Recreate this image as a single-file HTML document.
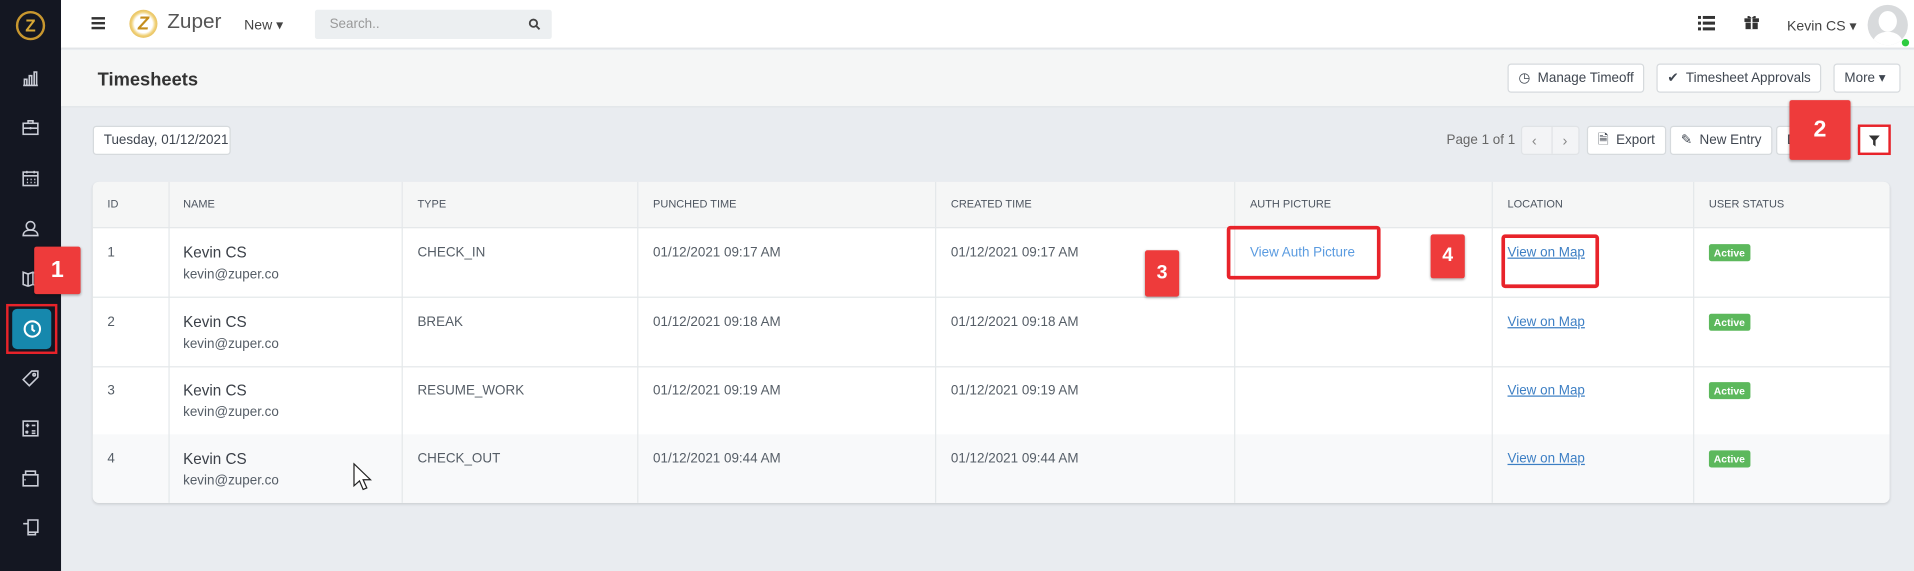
<!DOCTYPE html>
<html><head><meta charset="utf-8"><style>
*{box-sizing:border-box;margin:0;padding:0}
html,body{width:1914px;height:571px;overflow:hidden;background:#e9ecf0;font-family:"Liberation Sans",sans-serif}
#s{position:absolute;left:0;top:0;width:1568px;height:468px;transform:scale(1.22066);transform-origin:0 0;background:#e9ecf0}
.a{position:absolute}
.side{left:0;top:0;width:50px;height:468px;background:#141722}
.ic{position:absolute;left:19px;width:12px;height:12px;border:1.3px solid #c9ccd6;border-radius:2px}
.top{left:50px;top:0;width:1518px;height:40px;background:#fff;border-bottom:1px solid #dde1e4}
.hdr{left:50px;top:41px;width:1518px;height:47px;background:#f5f6f6;border-bottom:1px solid #dfe3e6}
.btn{position:absolute;background:#fff;border:1px solid #d6dadd;border-radius:3px;font-size:11px;color:#3f4650;line-height:22px;padding:0 8px;white-space:nowrap}
.tbl{left:76px;top:149px;width:1472px;height:263px;background:#fff;border-radius:5px;overflow:hidden;box-shadow:0 1px 2px rgba(0,0,0,.12)}
.th{position:absolute;top:0;height:38px;background:#f5f6f6;width:100%;border-bottom:1px solid #e4e8ea}
.col{position:absolute;top:0;height:263px;border-left:1px solid #e4e8ea}
.rw{position:absolute;left:0;width:100%;border-bottom:1px solid #e4e8ea}
.t{position:absolute;font-size:11px;color:#555d66;white-space:nowrap}
.h{font-size:9px;color:#4d5560;top:13px}
.nm{font-size:12.5px;color:#3b4048}
.lnk{color:#3d7fc4;text-decoration:underline}
.bad{position:absolute;background:#5cb85c;color:#fff;font-size:8.5px;font-weight:bold;padding:2px 4px;border-radius:2px;left:1324px}
.lab{position:absolute;background:#ee3b3b;color:#fff;font-weight:bold;text-align:center;border-radius:2px;box-shadow:0 1px 2px rgba(0,0,0,.3)}
.rbox{position:absolute;border:3px solid #e8232a;border-radius:3px}
</style></head><body><div id="s">
<div class="a side">
 <div class="a" style="left:13px;top:9px;width:24px;height:24px;border-radius:50%;border:2px solid #c8972f;color:#d8a836;font-weight:bold;font-size:14px;text-align:center;line-height:20px">Z</div>
 <svg class="a" style="left:18px;top:57px" width="14" height="14" viewBox="0 0 14 14" fill="none" stroke="#c9ccd6" stroke-width="1.3"><path d="M1 13h12M2 13V8h2v5M6 13V5h2v8M10 13V2h2v11"/></svg>
 <svg class="a" style="left:18px;top:97px" width="14" height="14" viewBox="0 0 14 14" fill="none" stroke="#c9ccd6" stroke-width="1.3"><rect x="1" y="4" width="12" height="9"/><path d="M5 4V2h4v2M1 8h12M7 7v2"/></svg>
 <svg class="a" style="left:18px;top:139px" width="14" height="14" viewBox="0 0 14 14" fill="none" stroke="#c9ccd6" stroke-width="1.3"><rect x="1" y="2" width="12" height="11"/><path d="M1 5h12M4 1v2M10 1v2M4 8h1M7 8h1M10 8h1M4 10.5h1M7 10.5h1M10 10.5h1"/></svg>
 <svg class="a" style="left:18px;top:180px" width="14" height="14" viewBox="0 0 14 14" fill="none" stroke="#c9ccd6" stroke-width="1.3"><circle cx="7" cy="5" r="3.5"/><path d="M1 13c0-3 2.5-4.5 6-4.5s6 1.5 6 4.5z"/></svg>
 <svg class="a" style="left:18px;top:221px" width="14" height="14" viewBox="0 0 14 14" fill="none" stroke="#c9ccd6" stroke-width="1.3"><path d="M1 2l4 1.5 4-1.5 4 1.5v10l-4-1.5-4 1.5-4-1.5zM5 3.5v10M9 2v10"/></svg>
 <div class="a" style="left:5px;top:249px;width:42px;height:41px;border:2.5px solid #e8232a"></div>
 <div class="a" style="left:10px;top:253px;width:32px;height:33px;background:#1688ad;border-radius:4px"><svg class="a" style="left:9px;top:9px" width="15" height="15" viewBox="0 0 15 15" fill="none" stroke="#fff" stroke-width="1.7"><circle cx="7.5" cy="7.5" r="6.3"/><path d="M7.5 4v4l2 1.5"/></svg></div>
 <svg class="a" style="left:18px;top:303px" width="14" height="14" viewBox="0 0 14 14" fill="none" stroke="#c9ccd6" stroke-width="1.3"><path d="M8 1h5v5l-7 7-5-5z"/><circle cx="10" cy="4" r="1"/></svg>
 <svg class="a" style="left:18px;top:344px" width="14" height="14" viewBox="0 0 14 14" fill="none" stroke="#c9ccd6" stroke-width="1.3"><rect x="1" y="1" width="12" height="12"/><path d="M3 4.5h3M4.5 3v3M8 4.5h3M3 9l2 2M5 9l-2 2M8 9h3M8 11h3"/></svg>
 <svg class="a" style="left:18px;top:385px" width="14" height="14" viewBox="0 0 14 14" fill="none" stroke="#c9ccd6" stroke-width="1.3"><path d="M1 4h12v9H1zM3 4V1h8v3"/><path d="M2 8h1"/></svg>
 <svg class="a" style="left:18px;top:425px" width="14" height="14" viewBox="0 0 14 14" fill="none" stroke="#c9ccd6" stroke-width="1.3"><path d="M5 1h8v10h-8zM1 4h4v9h6v-2"/></svg>
</div>
<div class="a top">
 <div class="a" style="left:25px;top:14px;width:11px;height:10px;border-top:2px solid #333;border-bottom:2px solid #333"><div style="margin-top:2px;height:2px;background:#333"></div></div>
 <div class="a" style="left:56px;top:8px;width:23px;height:23px;border-radius:50%;background:radial-gradient(circle,#fff 45%,#f0d178 60%,#d49a26 100%);color:#c58d1c;font-weight:bold;font-size:15px;text-align:center;line-height:23px;font-style:italic">Z</div>
 <div class="a" style="left:87px;top:8px;font-size:17px;color:#555">Zuper</div>
 <div class="a" style="left:150px;top:13px;font-size:11.5px;color:#444">New ▾</div>
 <div class="a" style="left:208px;top:8px;width:194px;height:24px;background:#eceff1;border-radius:2px;font-size:11px;color:#999;padding:6px 12px">Search..<svg style="position:absolute;right:9px;top:7px" width="10" height="10" viewBox="0 0 10 10" fill="none" stroke="#444" stroke-width="1.5"><circle cx="4" cy="4" r="3"/><path d="M6.2 6.2L9 9"/></svg></div>
 <svg class="a" style="left:1341px;top:13px" width="14" height="12" viewBox="0 0 14 12" fill="#333"><rect x="0" y="0" width="2.5" height="2.5"/><rect x="4" y="0" width="10" height="2.5"/><rect x="0" y="4.7" width="2.5" height="2.5"/><rect x="4" y="4.7" width="10" height="2.5"/><rect x="0" y="9.4" width="2.5" height="2.5"/><rect x="4" y="9.4" width="10" height="2.5"/></svg>
 <svg class="a" style="left:1379px;top:12px" width="12" height="12" viewBox="0 0 12 12" fill="#333"><rect x="0" y="3" width="12" height="3"/><rect x="1" y="6.5" width="10" height="5.5"/><path d="M6 3C4 0 1.5 1 3 3zM6 3c2-3 4.5-2 3 0z"/><rect x="5.3" y="3" width="1.4" height="9" fill="#fff"/></svg>
 <div class="a" style="left:1414px;top:14px;font-size:11.5px;color:#444">Kevin CS ▾</div>
 <div class="a" style="left:1480px;top:4px;width:33px;height:33px;border-radius:50%;background:#d8dadc;overflow:hidden"><div class="a" style="left:9px;top:5px;width:15px;height:17px;border-radius:50%;background:#fff"></div><div class="a" style="left:4px;top:22px;width:25px;height:20px;border-radius:50%;background:#fff"></div></div>
 <div class="a" style="left:1508px;top:32px;width:6px;height:6px;border-radius:50%;background:#2ecc40"></div>
</div>
<div class="a hdr">
 <div class="a" style="left:30px;top:16px;font-size:15px;font-weight:bold;color:#333">Timesheets</div>
</div>
<div class="btn" style="left:1235px;top:52px;height:24px;line-height:22px">◷&nbsp; Manage Timeoff</div>
<div class="btn" style="left:1357px;top:52px;height:24px">✔&nbsp; Timesheet Approvals</div>
<div class="btn" style="left:1502px;top:52px;height:24px;width:55px">More ▾</div>
<div class="btn" style="left:76px;top:103px;height:24px;width:113px">Tuesday, 01/12/2021</div>
<div class="a" style="left:1185px;top:109px;font-size:11px;color:#666">Page 1 of 1</div>
<div class="a" style="left:1246px;top:103px;width:48px;height:24px;background:#f3f4f6;border:1px solid #e0e3e6;border-radius:3px;color:#888;font-size:12px;line-height:22px"><span style="position:absolute;left:8px">‹</span><span style="position:absolute;left:24px;top:0;height:22px;border-left:1px solid #e0e3e6"></span><span style="position:absolute;left:33px">›</span></div>
<div class="btn" style="left:1300px;top:103px;height:24px">🗎&nbsp; Export</div>
<div class="btn" style="left:1368px;top:103px;height:24px">✎&nbsp; New Entry</div>
<div class="btn" style="left:1455px;top:103px;height:24px;width:30px">D</div>
<div class="lab" style="left:1466px;top:82px;width:50px;height:49px;font-size:19px;line-height:49px">2</div>
<div class="btn" style="left:1521px;top:103px;height:24px;width:28px;padding:0"><svg style="position:absolute;left:9px;top:7px" width="9" height="9" viewBox="0 0 9 9" fill="#333"><path d="M0 0h9L5.5 4v5l-2-1.5V4z"/></svg></div>
<div class="a" style="left:1522px;top:102px;width:27px;height:25px;border:2.5px solid #e8232a"></div>
<div class="a tbl">
 <div class="th"></div>
 <div class="rw" style="top:38px;height:57px"></div>
 <div class="rw" style="top:95px;height:57px"></div>
 <div class="rw" style="top:151px;height:57px"></div>
 <div class="rw" style="top:207px;height:56px;background:#f8f9fa;border:0"></div>
 <div class="col" style="left:62px"></div><div class="col" style="left:253px"></div><div class="col" style="left:446px"></div><div class="col" style="left:690px"></div><div class="col" style="left:935px"></div><div class="col" style="left:1146px"></div><div class="col" style="left:1311px"></div>
 <div class="t h" style="left:12px">ID</div><div class="t h" style="left:74px">NAME</div><div class="t h" style="left:266px">TYPE</div><div class="t h" style="left:459px">PUNCHED TIME</div><div class="t h" style="left:703px">CREATED TIME</div><div class="t h" style="left:948px">AUTH PICTURE</div><div class="t h" style="left:1159px">LOCATION</div><div class="t h" style="left:1324px">USER STATUS</div>
 <div class="t" style="left:12px;top:52px">1</div><div class="t nm" style="left:74px;top:51px">Kevin CS</div><div class="t" style="left:74px;top:70px">kevin@zuper.co</div><div class="t" style="left:266px;top:52px">CHECK_IN</div><div class="t" style="left:459px;top:52px">01/12/2021 09:17 AM</div><div class="t" style="left:703px;top:52px">01/12/2021 09:17 AM</div><div class="t" style="left:948px;top:52px;color:#5a9be0">View Auth Picture</div><div class="t lnk" style="left:1159px;top:52px">View on Map</div><div class="bad" style="top:51px">Active</div>
 <div class="t" style="left:12px;top:109px">2</div><div class="t nm" style="left:74px;top:108px">Kevin CS</div><div class="t" style="left:74px;top:127px">kevin@zuper.co</div><div class="t" style="left:266px;top:109px">BREAK</div><div class="t" style="left:459px;top:109px">01/12/2021 09:18 AM</div><div class="t" style="left:703px;top:109px">01/12/2021 09:18 AM</div><div class="t lnk" style="left:1159px;top:109px">View on Map</div><div class="bad" style="top:108px">Active</div>
 <div class="t" style="left:12px;top:165px">3</div><div class="t nm" style="left:74px;top:164px">Kevin CS</div><div class="t" style="left:74px;top:183px">kevin@zuper.co</div><div class="t" style="left:266px;top:165px">RESUME_WORK</div><div class="t" style="left:459px;top:165px">01/12/2021 09:19 AM</div><div class="t" style="left:703px;top:165px">01/12/2021 09:19 AM</div><div class="t lnk" style="left:1159px;top:165px">View on Map</div><div class="bad" style="top:164px">Active</div>
 <div class="t" style="left:12px;top:221px">4</div><div class="t nm" style="left:74px;top:220px">Kevin CS</div><div class="t" style="left:74px;top:239px">kevin@zuper.co</div><div class="t" style="left:266px;top:221px">CHECK_OUT</div><div class="t" style="left:459px;top:221px">01/12/2021 09:44 AM</div><div class="t" style="left:703px;top:221px">01/12/2021 09:44 AM</div><div class="t lnk" style="left:1159px;top:221px">View on Map</div><div class="bad" style="top:220px">Active</div>
</div>
<div class="lab" style="left:28px;top:202px;width:38px;height:39px;font-size:19px;line-height:39px">1</div>
<div class="lab" style="left:938px;top:205px;width:28px;height:38px;font-size:16px;line-height:38px">3</div>
<div class="lab" style="left:1172px;top:192px;width:28px;height:36px;font-size:16px;line-height:36px">4</div>
<div class="rbox" style="left:1005px;top:185px;width:126px;height:44px"></div>
<div class="rbox" style="left:1230px;top:192px;width:80px;height:44px"></div>
<svg class="a" style="left:289px;top:379px" width="16" height="24" viewBox="0 0 16 24"><path d="M1 1v18l4.5-4 3 7 3-1.3-3-6.7h6z" fill="#fff" stroke="#222" stroke-width="1"/></svg>
</div></body></html>
